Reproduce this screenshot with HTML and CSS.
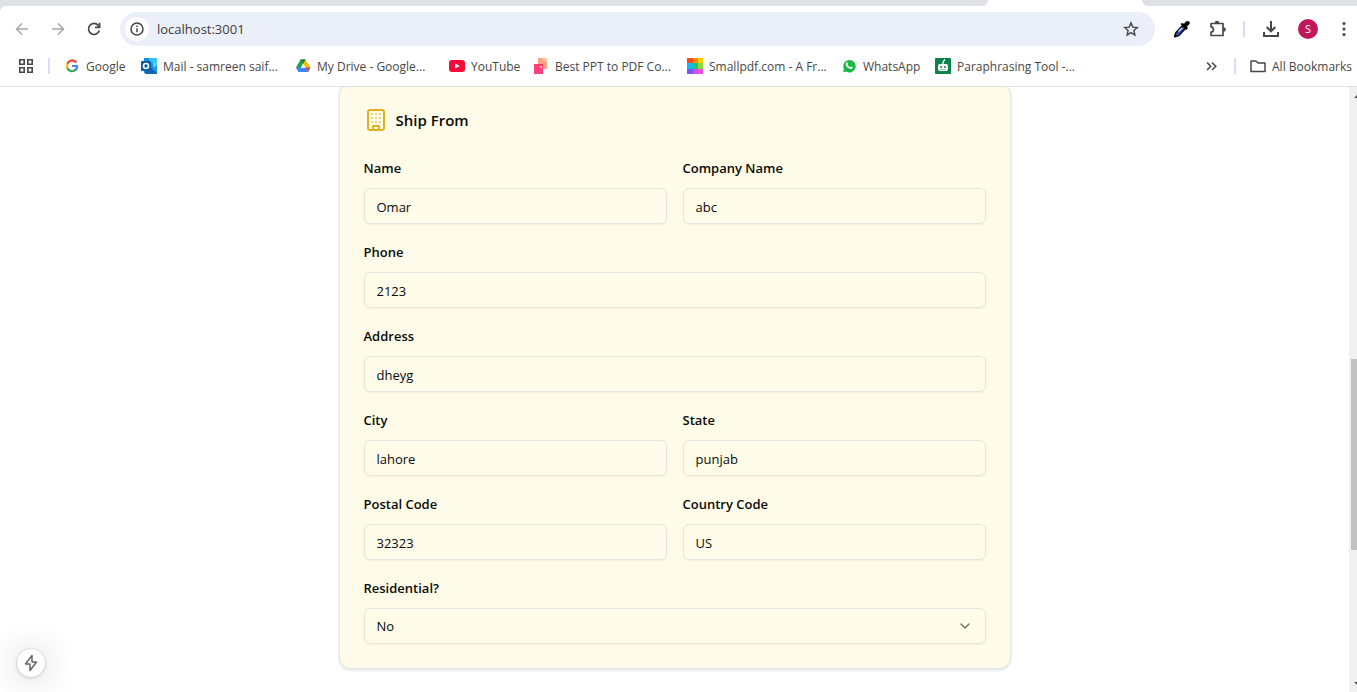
FILE: index.html
```html
<!DOCTYPE html>
<html lang="en">
<head>
<meta charset="utf-8">
<meta name="viewport" content="width=device-width, initial-scale=1">
<title>Ship From</title>
<link rel="stylesheet" href="styles.css">
</head>
<body>
<header class="browser">
  <div class="tabstrip">
    <div class="tabs-before"></div>
    <div class="tab-active"></div>
    <div class="tabs-after"></div>
  </div>
  <div class="chrome">
    <div class="toolbar">
      <nav class="nav-buttons" aria-label="History">
        <button class="icon-btn faded" aria-label="Back"><svg width="16" height="16" viewBox="0 0 16 16" fill="none" stroke="currentColor" stroke-width="1.5"><path d="M14 8H3M8 2.5 2.5 8 8 13.500"/></svg></button>
        <button class="icon-btn faded" aria-label="Forward"><svg width="16" height="16" viewBox="0 0 16 16" fill="none" stroke="currentColor" stroke-width="1.500"><path d="M2 8h11M8 2.500 13.500 8 8 13.500"/></svg></button>
        <button class="icon-btn" aria-label="Reload"><svg width="16" height="16" viewBox="0 0 16 16" fill="none" stroke="currentColor" stroke-width="1.700"><path d="M13.300 9.500A5.500 5.500 0 1 1 12.200 4.400L13.300 5.700"/><path d="M13.600 1.700v4.600H9"/></svg></button>
      </nav>
      <div class="omnibox">
        <button class="site-info" aria-label="View site information"><svg width="16" height="16" viewBox="0 0 16 16" fill="none" stroke="currentColor" stroke-width="1.500"><circle cx="8" cy="8" r="6"/><path d="M8 7.200v4M8 4.500v1.600"/></svg></button>
        <input class="url" type="text" aria-label="Address bar" value="localhost:3001">
        <button class="icon-btn star" aria-label="Bookmark this tab"><svg width="16" height="16" viewBox="0 0 16 16" fill="none" stroke="currentColor" stroke-width="1.400"><path d="m8 1.900 1.800 4.200 4.500.4-3.400 3 1 4.500L8 11.600 4.100 14l1-4.500-3.400-3 4.500-.4z"/></svg></button>
      </div>
      <div class="actions">
        <button class="icon-btn" aria-label="Color picker"><svg width="18" height="18" viewBox="0 0 18 18"><path d="m3 12.500 6.500-7 3 3-6.500 7L2 17l-.5-.8z" fill="#3f51a5" stroke="#080808" stroke-width="1.400"/><path d="m5.500 11.500 3.500-3.500" stroke="#dce4fa" stroke-width="1.200"/><path d="m7.500 4 1.500-1 2 .8 2-2.300Q15 .4 16.500 1.800q1 1.400-.4 2.800l-2 2 .7 1.800-1.500 1.500z" fill="#050505"/></svg></button>
        <button class="icon-btn" aria-label="Extensions"><svg width="18" height="18" viewBox="0 0 18 18" fill="none" stroke="currentColor" stroke-width="1.700" stroke-linejoin="round"><path d="M2 3.500h12v12H2v-3.300c3.300-.4 3.300-5 0-5.400z"/><path d="M6.500 3a1.500 1.500 0 0 1 3 0M14.500 8a1.500 1.500 0 0 1 0 3" fill="currentColor"/></svg></button>
        <span class="divider"></span>
        <button class="icon-btn" aria-label="Downloads"><svg width="18" height="18" viewBox="0 0 18 18" fill="none" stroke="currentColor" stroke-width="2"><path d="M9 1v10M4.700 7 9 11.300 13.300 7M2 12v4h14v-4"/></svg></button>
        <button class="avatar" aria-label="Profile">S</button>
        <button class="icon-btn" aria-label="Menu"><svg width="16" height="16" viewBox="0 0 16 16" fill="currentColor"><circle cx="8" cy="2.500" r="1.600"/><circle cx="8" cy="8" r="1.600"/><circle cx="8" cy="13.500" r="1.600"/></svg></button>
      </div>
    </div>
    <nav class="bookmarks" aria-label="Bookmarks">
      <button class="icon-btn" aria-label="Tab groups"><svg width="16" height="16" viewBox="0 0 16 16" fill="none" stroke="currentColor" stroke-width="1.600"><path d="M1.800 1.800h4.400v4.400H1.800zM9.800 1.800h4.400v4.400H9.800zM1.800 9.800h4.400v4.400H1.800zM9.800 9.800h4.400v4.400H9.800z"/></svg></button>
      <span class="divider"></span>
      <div class="bookmark-list">
        <a class="bookmark" href="#"><svg width="16" height="16" viewBox="0 0 16 16" fill="none" stroke-width="2.200"><path d="M12.300 4.500A5 5 0 0 0 3.500 5.800" stroke="#ea4335"/><path d="M3.500 5.500a5 5 0 0 0 0 5" stroke="#fbbc05"/><path d="M3.400 10.200a5 5 0 0 0 8.300 1.400" stroke="#34a853"/><path d="M8 8h5a5 5 0 0 1-1.600 4" stroke="#4285f4"/></svg><span>Google</span></a>
        <a class="bookmark" href="#"><svg width="16" height="16" viewBox="0 0 16 16"><path d="M3 0h13v15H3z" fill="#1490df"/><path d="M8 0h8v5H8z" fill="#31c4f4"/><path d="M12 5h4v4h-4z" fill="#50d9ff"/><path d="M16 7v9H4z" fill="#1c9ee4"/><path d="m9 9 7 6v1H4v-4z" fill="#1266b3"/><rect y="3" width="10" height="10" rx="1" fill="#0a5ca8"/><circle cx="5" cy="8" r="2.500" fill="none" stroke="#fff" stroke-width="1.600"/></svg><span>Mail - samreen saif...</span></a>
        <a class="bookmark" href="#"><svg width="16" height="16" viewBox="0 0 16 16"><path d="M5.500 1.500h5L8 6 3.700 13.500 1 9.500z" fill="#21a050"/><path d="M5.500 1.500h5l5 8h-5z" fill="#fbbc04"/><path d="M5.500 1.500h5L8 6z" fill="#14813b"/><path d="M1 9.500h14.500L13 14H3.500z" fill="#4285f4"/><path d="M11 9.500h4.500L13 14z" fill="#ea4335"/><path d="m8 6 2.200 3.800H5.800z" fill="#fff"/></svg><span>My Drive - Google...</span></a>
        <a class="bookmark" href="#"><svg width="16" height="16" viewBox="0 0 16 16"><rect y="2" width="16" height="12" rx="3" fill="#f50b37"/><path d="m6.200 5.500 4.600 2.500-4.600 2.500z" fill="#fff"/></svg><span>YouTube</span></a>
        <a class="bookmark" href="#"><svg width="16" height="16" viewBox="0 0 16 16"><path d="M5 0h9v11H5z" fill="#ffa184"/><path d="M10 0h4v4h-4z" fill="#ffc1a8"/><path d="M1 6h9v10H1z" fill="#ff407e"/><path d="M5 6h5v5H7z" fill="#f33b62"/><path d="M6 8h3v3z" fill="#ffd7d6"/></svg><span>Best PPT to PDF Co...</span></a>
        <a class="bookmark" href="#"><svg width="16" height="16" viewBox="0 0 16 16"><path d="M0 0h6v5H0z" fill="#ff4b16"/><path d="M6 0h5v5H6z" fill="#ff8c08"/><path d="M11 0h5v5h-5z" fill="#ffd000"/><path d="M0 5h6v6H0z" fill="#16b7f5"/><path d="M6 5h5v6H6z" fill="#20c86c"/><path d="M11 5h5v6h-5z" fill="#8bdc3c"/><path d="M0 11h6v5H0z" fill="#7955f2"/><path d="M6 11h5v5H6z" fill="#c953f6"/><path d="M11 11h5v5h-5z" fill="#f34ed8"/></svg><span>Smallpdf.com - A Fr...</span></a>
        <a class="bookmark" href="#"><svg width="16" height="16" viewBox="0 0 16 16"><path d="M2 14.300 3 11A6.200 6.200 0 1 1 5.200 13.400z" fill="#16b941"/><path d="M5.500 4.500c.9-.7 1.300 0 1.700 1.200.1.600-.7.900-.5 1.300.5 1.100 1.400 1.800 2.400 2.200.5.100.8-1 1.300-.8 1.200.5 1.800.9 1.300 1.600-.7 1.200-2.300 1.200-3.900.3C6 9.300 4.800 7.700 4.700 6.300c0-.8.300-1.400.8-1.800z" fill="#fff"/></svg><span>WhatsApp</span></a>
        <a class="bookmark" href="#"><svg width="16" height="16" viewBox="0 0 16 16"><rect width="16" height="16" rx="1" fill="#098349"/><rect x="3" y="6" width="10" height="7" rx="2" fill="#fff"/><path d="M8 7V4l2-2.500" fill="none" stroke="#fff" stroke-width="1.300"/><circle cx="6" cy="9" r="1" fill="#098349"/><circle cx="10" cy="9" r="1" fill="#098349"/><path d="M5 11.500h6" stroke="#9bd0b4"/></svg><span>Paraphrasing Tool -...</span></a>
      </div>
      <button class="icon-btn more" aria-label="More bookmarks"><svg width="16" height="16" viewBox="0 0 16 16" fill="none" stroke="currentColor" stroke-width="1.500"><path d="m3 4.500 3.800 3.800L3 12M8 4.500l3.800 3.800L8 12"/></svg></button>
      <span class="divider"></span>
      <a class="all-bookmarks" href="#"><svg width="16" height="16" viewBox="0 0 16 16" fill="none" stroke="currentColor" stroke-width="1.500" stroke-linejoin="round"><path d="M1 3h5l2 2h7v8.500H1z"/></svg><span>All Bookmarks</span></a>
    </nav>
  </div>
</header>
<div class="viewport">
  <main class="page">
    <form class="card">
      <h2 class="card-title"><svg width="24" height="24" viewBox="0 0 24 24" fill="none" stroke="currentColor" stroke-width="2" stroke-linecap="round" stroke-linejoin="round"><rect x="4" y="2" width="16" height="20" rx="2"/><path d="M9 22v-4h6v4"/><path class="windows" d="M8 6h.01M12 6h.01M16 6h.01M8 10h.01M12 10h.01M16 10h.01M8 14h.01M12 14h.01M16 14h.01"/></svg>Ship From</h2>
      <div class="fields">
        <div class="field"><label for="name">Name</label><input id="name" type="text" value="Omar"></div>
        <div class="field"><label for="company">Company Name</label><input id="company" type="text" value="abc"></div>
        <div class="field wide"><label for="phone">Phone</label><input id="phone" type="text" value="2123"></div>
        <div class="field wide"><label for="address">Address</label><input id="address" type="text" value="dheyg"></div>
        <div class="field"><label for="city">City</label><input id="city" type="text" value="lahore"></div>
        <div class="field"><label for="state">State</label><input id="state" type="text" value="punjab"></div>
        <div class="field"><label for="postal">Postal Code</label><input id="postal" type="text" value="32323"></div>
        <div class="field"><label for="country">Country Code</label><input id="country" type="text" value="US"></div>
        <div class="field wide"><label for="residential">Residential?</label>
          <div class="select-wrap"><select id="residential"><option>No</option><option>Yes</option></select><svg class="caret" width="16" height="16" viewBox="0 0 16 16" fill="none" stroke="currentColor" stroke-width="1.300" stroke-linecap="round" stroke-linejoin="round"><path d="m4 6 4 4 4-4"/></svg></div>
        </div>
      </div>
    </form>
  </main>
  <div class="scrollbar" aria-hidden="true">
    <div class="scroll-inner">
      <span class="arrow up"></span>
      <div class="track"><div class="thumb"></div></div>
      <span class="arrow down"></span>
    </div>
  </div>
</div>
<button class="dev-badge" aria-label="Developer tools"><svg width="18" height="18" viewBox="0 0 18 18" fill="none" stroke="currentColor" stroke-width="1.500" stroke-linejoin="round"><path d="M10 1.500 3.500 10H8v6.500L14.500 8H10z"/></svg></button>
</body>
</html>
```
FILE: styles.css
```css
* { box-sizing: border-box; }
body {
  margin: 0;
  height: 100vh;
  display: flex;
  flex-direction: column;
  overflow: hidden;
  background: #fff;
  color: #0a0a0a;
  font-family: "Open Sans", "Noto Sans", sans-serif;
}
button, input, select { font: inherit; color: inherit; }
button { border: 0; padding: 0; background: none; }
a { color: inherit; text-decoration: none; }
svg { display: block; flex: none; }

/* Browser frame */
.browser { flex: none; color: #474747; font-size: 12px; }
.tabstrip { display: flex; height: 6px; background: #fff; }
.tabs-before, .tabs-after { background: #dee1e6; }
.tabs-before { flex: 988; border-bottom-right-radius: 8px; }
.tab-active { flex: 154; }
.tabs-after { flex: 215; border-bottom-left-radius: 8px; }
.chrome {
  background: #fff;
  border-bottom: 1px solid #dfe1e5;
}
.chrome::before {
  content: "";
  display: block;
  height: 6px;
  background: radial-gradient(circle at 6px 6px, #fff 6px, #dee1e6 6px) left / 6px 6px no-repeat;
}
.toolbar { display: flex; align-items: center; height: 34px; padding-right: 5px; }
.nav-buttons { display: flex; gap: 20px; padding: 0 18px 0 14px; }
.icon-btn { display: flex; flex: none; align-items: center; justify-content: center; }
.faded { color: #a8a8a8; }
.omnibox {
  flex: 1;
  display: flex;
  align-items: center;
  height: 34px;
  padding: 0 16px 0 5px;
  border-radius: 17px;
  background: #ebeff9;
}
.site-info {
  display: flex;
  align-items: center;
  justify-content: center;
  width: 24px;
  height: 24px;
  border-radius: 50%;
  background: #fff;
}
.url {
  flex: 1;
  min-width: 0;
  margin-left: 8px;
  padding: 0;
  border: 0;
  outline: 0;
  background: none;
  font-size: 13px;
  color: #3c3c3c;
}
.actions { display: flex; align-items: center; gap: 18px; padding-left: 18px; }
.divider { flex: none; width: 2px; height: 16px; background: #d3e0f8; }
.actions .divider { margin: 0 -1px 0 -2px; }
.avatar {
  width: 20px;
  height: 20px;
  border-radius: 50%;
  background: #c2185b;
  color: #fff;
  font-size: 11px;
  line-height: 20px;
}
.bookmarks { display: flex; align-items: center; height: 40px; padding: 0 5px 0 18px; }
.bookmarks .divider { margin: 0 14px; }
.bookmark-list {
  flex: 1;
  display: grid;
  grid-template-columns: 77px 154px 154px 84px 154px 154px 94px 154px;
}
.bookmark, .all-bookmarks { display: flex; align-items: center; gap: 6px; white-space: nowrap; }

/* Page area */
.viewport { flex: 1; min-height: 0; display: flex; }
.page { flex: 1; min-width: 0; overflow: hidden; }
.card {
  max-width: 672px;
  margin: -4px auto 0;
  padding: 24px;
  border: 1px solid #e5e7eb;
  border-radius: 12px;
  background: #fefce8;
  box-shadow: 0 1px 3px rgba(0, 0, 0, 0.14);
}
.card-title {
  display: flex;
  align-items: center;
  gap: 8px;
  margin: 0 0 24px;
  font-size: 15px;
  line-height: 24px;
  font-weight: 600;
}
.card-title svg { color: #e0b020; }
.windows { opacity: 0.7; }
.fields { display: grid; grid-template-columns: 1fr 1fr; gap: 16px; }
.wide { grid-column: 1 / -1; }
.field { min-width: 0; font-size: 13px; }
.field label { display: block; margin-bottom: 8px; line-height: 24px; font-weight: 600; }
.field input, .field select {
  display: block;
  width: 100%;
  height: 36px;
  padding: 2px 12px 0;
  border: 1px solid #e5e5df;
  border-radius: 6px;
  outline: 0;
  background: transparent;
  box-shadow: 0 1px 2px rgba(0, 0, 0, 0.05);
}
.field select { appearance: none; padding-top: 0; }
.select-wrap { position: relative; }
.caret { position: absolute; right: 13px; top: 10px; color: #6b6a60; pointer-events: none; }

.scrollbar { flex: none; width: 8px; overflow: hidden; background: #f0f0f0; }
.scroll-inner { display: flex; flex-direction: column; align-items: center; width: 17px; height: 100%; padding: 7px 0 6px; }
.arrow { border: 4px solid transparent; }
.up { border-top: 0; border-bottom-color: #505050; }
.down { border-bottom: 0; border-top-color: #505050; }
.track { flex: 1; width: 100%; padding: 0 2px; display: flex; flex-direction: column; }
.track::before { content: ""; flex: 261; }
.track::after { content: ""; flex: 132; }
.thumb { flex: 190; background: #c1c1c1; }

.dev-badge {
  position: fixed;
  left: 17px;
  bottom: 15px;
  display: flex;
  align-items: center;
  justify-content: center;
  width: 28px;
  height: 28px;
  border-radius: 50%;
  background: #fff;
  color: #666;
  box-shadow: 0 0 0 1px rgba(0, 0, 0, 0.07), 0 1px 4px rgba(0, 0, 0, 0.14), 0 2px 32px 8px rgba(0, 0, 0, 0.09);
}
```
